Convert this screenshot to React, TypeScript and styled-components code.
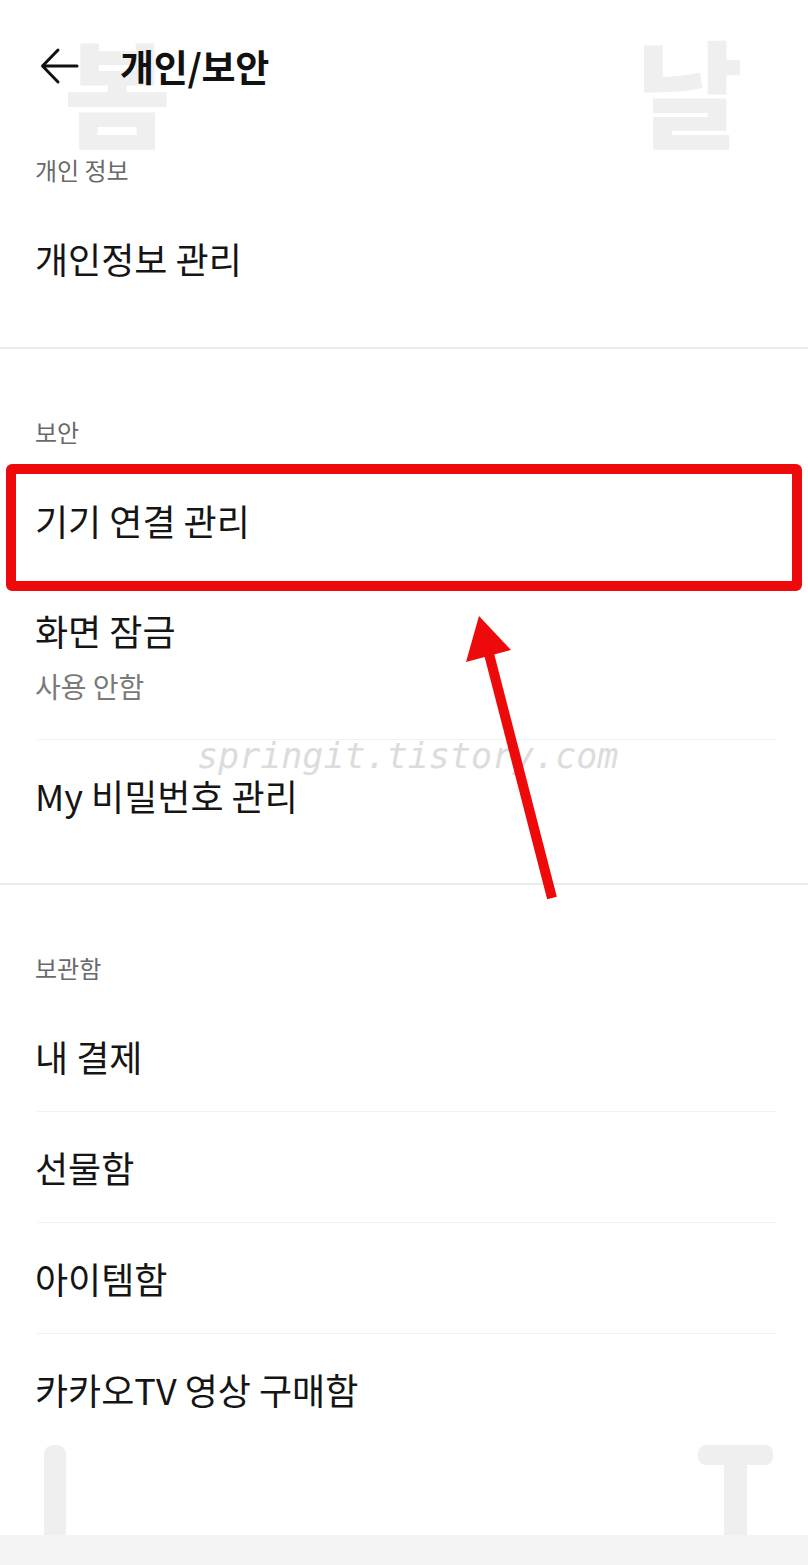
import React from "react";
import styled, { createGlobalStyle } from "styled-components";

const GlobalStyle = createGlobalStyle`
  html, body {
    margin: 0;
    padding: 0;
    background: #fff;
  }
  * {
    box-sizing: border-box;
  }
`;

const Page = styled.div`
  position: relative;
  width: 808px;
  min-height: 1565px;
  background: #fff;
  overflow: hidden;
  font-family: "Noto Sans CJK KR", "Noto Sans", sans-serif;
  color: #151515;
  display: flex;
  flex-direction: column;
`;

// big faint letters behind the screen (blog watermark)
const BgGlyph = styled.span<{ $left: number; $top: number }>`
  position: absolute;
  left: ${(p) => p.$left}px;
  top: ${(p) => p.$top}px;
  font-size: 116px;
  line-height: 1.4;
  font-weight: 900;
  color: #efefef;
  z-index: 0;
  user-select: none;
`;

const Watermark = styled.span`
  position: absolute;
  left: 197px;
  top: 735px;
  font-family: "DejaVu Sans Mono", monospace;
  font-style: oblique;
  font-size: 35px;
  line-height: 1.2;
  color: #dcdcdc;
  z-index: 3;
  pointer-events: none;
`;

const Content = styled.div`
  position: relative;
  z-index: 1;
  flex: 1;
  display: flex;
  flex-direction: column;
`;

const Header = styled.header`
  height: 135px;
  display: flex;
  align-items: center;
  gap: 40px;
  padding-left: 40px;
  padding-bottom: 3px;
`;

const BackButton = styled.button`
  width: 40px;
  height: 40px;
  padding: 0;
  border: none;
  background: none;
  display: flex;
  align-items: center;
  cursor: pointer;
`;

const Title = styled.h1`
  margin: 0;
  font-size: 37px;
  line-height: 44px;
  font-weight: 700;
  color: #111;
  letter-spacing: -0.3px;
`;

const Section = styled.section<{ $top: number; $bottom: number }>`
  padding-top: ${(p) => p.$top}px;
  padding-bottom: ${(p) => p.$bottom}px;
  display: flex;
  flex-direction: column;
`;

const SectionLabel = styled.div`
  height: 68px;
  display: flex;
  align-items: center;
  padding-left: 35px;
  font-size: 24px;
  color: #6a6a6a;
`;

const Row = styled.div<{ $tall?: boolean }>`
  height: ${(p) => (p.$tall ? 164 : 110)}px;
  padding: ${(p) => (p.$tall ? "34px 35px 0" : "0 35px")};
  display: flex;
  flex-direction: column;
  justify-content: ${(p) => (p.$tall ? "flex-start" : "center")};
`;

const RowTitle = styled.div`
  font-size: 36px;
  line-height: 42px;
  color: #151515;
`;

const RowSub = styled.div`
  margin-top: 18px;
  font-size: 28px;
  line-height: 34px;
  color: #7a7a7a;
`;

const ItemLine = styled.div`
  height: 1px;
  margin: 0 33px 0 37px;
  background: #f1f1f1;
`;

const SectionLine = styled.div`
  height: 2px;
  background: #ebebeb;
`;

const Footer = styled.div`
  height: 30px;
  background: #f4f4f4;
  position: relative;
  z-index: 1;
`;

const Highlight = styled.div`
  position: absolute;
  left: 6px;
  top: 464px;
  width: 796px;
  height: 127px;
  border: 10px solid #ee0a0a;
  border-radius: 6px;
  z-index: 4;
  pointer-events: none;
`;

const Overlay = styled.svg`
  position: absolute;
  left: 0;
  top: 0;
  z-index: 4;
  pointer-events: none;
`;

const BottomDecor = styled.svg`
  position: absolute;
  left: 0;
  top: 1440px;
  z-index: 0;
`;

type Item = { title: string; sub?: string };

const storage: Item[] = [
  { title: "내 결제" },
  { title: "선물함" },
  { title: "아이템함" },
  { title: "카카오TV 영상 구매함" },
];

function ListRow({ item }: { item: Item }) {
  return (
    <Row $tall={!!item.sub}>
      <RowTitle>{item.title}</RowTitle>
      {item.sub && <RowSub>{item.sub}</RowSub>}
    </Row>
  );
}

export default function App() {
  return (
    <>
      <GlobalStyle />
      <Page>
        <BgGlyph $left={64} $top={7}>봄</BgGlyph>
        <BgGlyph $left={636} $top={7}>날</BgGlyph>
        <BottomDecor width="808" height="100" viewBox="0 1440 808 100">
          <rect x="44" y="1445" width="22" height="100" rx="9" fill="#efefef" />
          <rect x="698" y="1445" width="75" height="20" rx="8" fill="#efefef" />
          <rect x="724" y="1455" width="23" height="90" fill="#efefef" />
        </BottomDecor>

        <Content>
          <Header>
            <BackButton aria-label="뒤로">
              <svg width="40" height="40" viewBox="0 0 40 40" fill="none">
                <path
                  d="M37 20H3M18 4L2.5 20L18 36"
                  stroke="#111"
                  strokeWidth="3"
                  strokeLinecap="round"
                  strokeLinejoin="round"
                />
              </svg>
            </BackButton>
            <Title>개인/보안</Title>
          </Header>

          <Section $top={0} $bottom={34}>
            <SectionLabel>개인 정보</SectionLabel>
            <ListRow item={{ title: "개인정보 관리" }} />
          </Section>
          <SectionLine />

          <Section $top={48} $bottom={33}>
            <SectionLabel>보안</SectionLabel>
            <ListRow item={{ title: "기기 연결 관리" }} />
            <ListRow item={{ title: "화면 잠금", sub: "사용 안함" }} />
            <ItemLine />
            <ListRow item={{ title: "My 비밀번호 관리" }} />
          </Section>
          <SectionLine />

          <Section $top={48} $bottom={90}>
            <SectionLabel>보관함</SectionLabel>
            {storage.map((item, i) => (
              <React.Fragment key={item.title}>
                {i > 0 && <ItemLine />}
                <ListRow item={item} />
              </React.Fragment>
            ))}
          </Section>
        </Content>
        <Footer />

        <Watermark>springit.tistory.com</Watermark>
        <Highlight />
        <Overlay width="808" height="1565" viewBox="0 0 808 1565">
          <line x1="552" y1="898" x2="488" y2="650" stroke="#ee0a0a" strokeWidth="10" />
          <polygon points="479,616 466,662 511,650" fill="#ee0a0a" />
        </Overlay>
      </Page>
    </>
  );
}
